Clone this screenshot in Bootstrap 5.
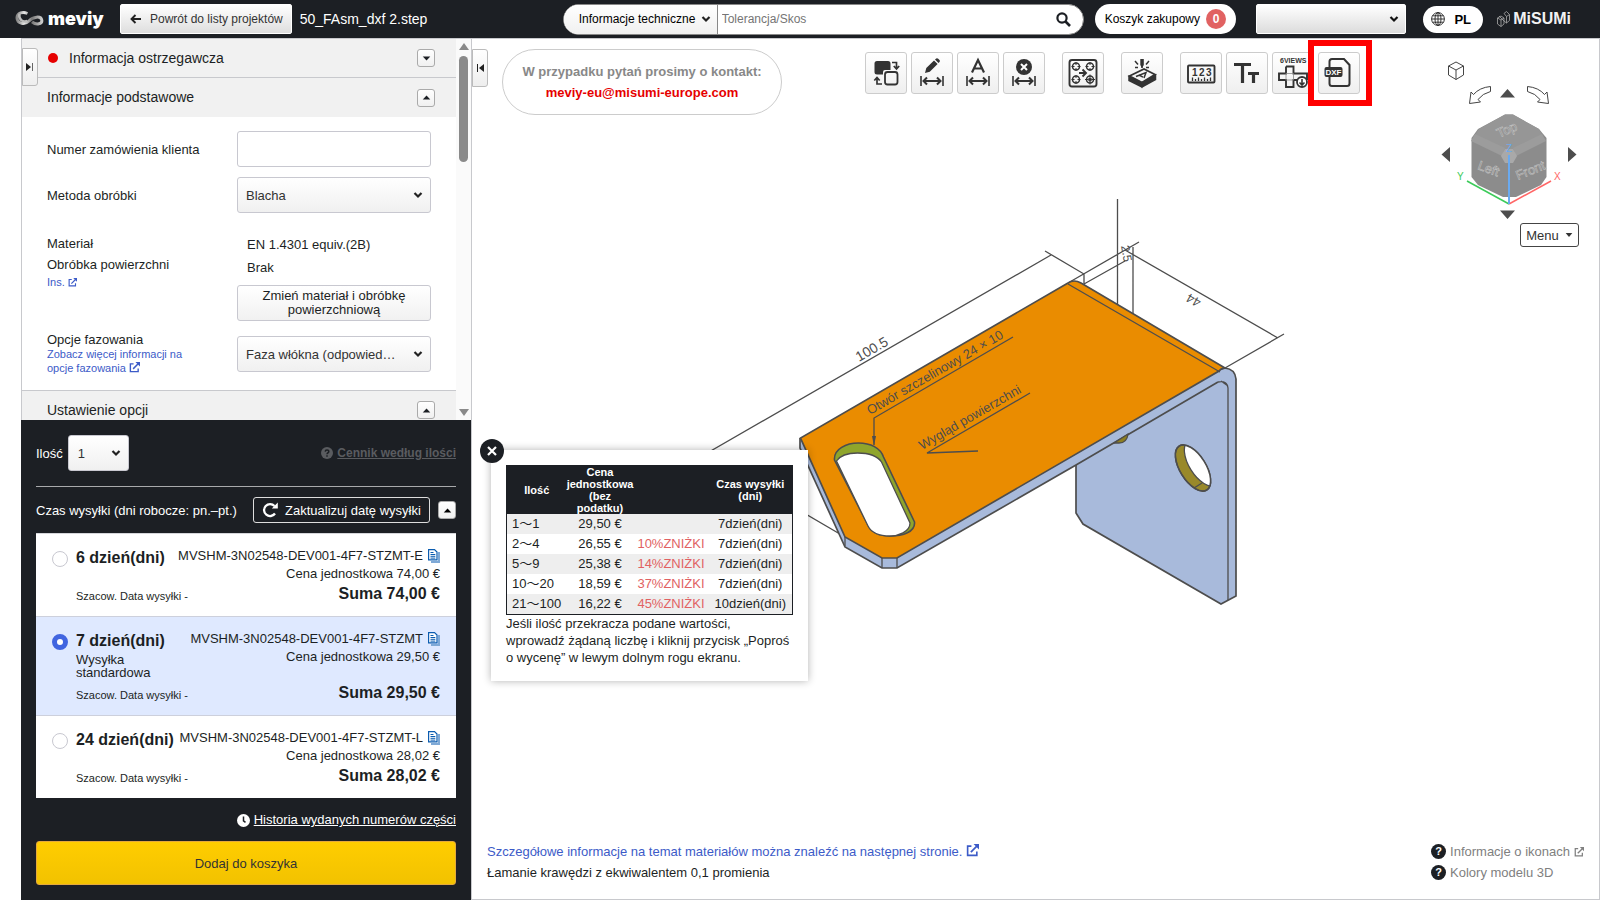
<!DOCTYPE html>
<html lang="pl">
<head>
<meta charset="utf-8">
<meta name="viewport" content="width=device-width, initial-scale=1">
<title>meviy – 50_FAsm_dxf 2.step</title>
<link href="https://cdn.jsdelivr.net/npm/bootstrap@5.3.0/dist/css/bootstrap.min.css" rel="stylesheet">
<style>
:root{--ink:#1c1f24;--line:#c8c9cd;--blue:#3c5bc8}
body{font-family:"Liberation Sans",Arial,sans-serif;font-size:13px;line-height:17px;color:var(--ink);background:#fff}
svg{display:block;flex:none}
button{color:inherit}
.min-h-0{min-height:0}
.fs-11{font-size:11px}.fs-12{font-size:12px}.fs-14{font-size:14px}.fs-16{font-size:16px;line-height:20px}
.mt-a{margin-top:10px}.mt-b{margin-top:20px}
.topbar{background:var(--ink);height:38px;padding:0 29px 0 15px}
.brand{width:90px;margin-right:15px;color:#fff;text-decoration:none;font:900 18px/24px Inter,sans-serif}
.btn-top{height:30px;border:1px solid #fff;border-radius:2px;background:linear-gradient(#fff,#dedede);color:#333;font-size:12px;padding:0 8px 0 9px;gap:8px}
.search{width:521px;height:31px;border:1px solid #888;border-radius:16px;background:#fff;overflow:hidden}
.search select{width:154px;height:29px;border:0;border-right:1px solid #888;border-radius:0;background-color:#fff;padding:0 20px 0 15px;background-position:right 6px center}
.search input{border:0;outline:0;font-size:12px;padding:0 4px;min-width:0}
.search input::placeholder{color:#757575;opacity:1}
.sel{appearance:none;border:1px solid #c8c8d0;border-radius:3px;height:36px;padding:0 24px 0 8px;color:#333;background:url("data:image/svg+xml,%3Csvg xmlns='http://www.w3.org/2000/svg' width='10' height='8' viewBox='0 0 10 8'%3E%3Cpath d='M1.5 2l3.500 3.500L8.500 2' fill='none' stroke='%23222' stroke-width='2.200'/%3E%3C/svg%3E") no-repeat right 7px center,linear-gradient(#fff,#f0f0f0)}
.sel-user{width:150px;height:30px;margin-left:20px;border-color:#fff;border-radius:2px;background-image:url("data:image/svg+xml,%3Csvg xmlns='http://www.w3.org/2000/svg' width='10' height='8' viewBox='0 0 10 8'%3E%3Cpath d='M1.500 2l3.500 3.500L8.500 2' fill='none' stroke='%23111' stroke-width='2.200'/%3E%3C/svg%3E"),linear-gradient(#fff,#dcdcdc);background-position:right 6px center,0 0}
.pill{background:#fff;border:0;border-radius:16px;height:30px;padding:0 10px;margin-left:11px;gap:6px}
.pill-lang{height:27px;width:60px;padding:0 12px 0 8px;margin-left:17px}
.count{width:20px;height:20px;border-radius:50%;background:#e16262;color:#fff;font-weight:700;font-size:12px;line-height:20px}
.misumi{margin-left:14px;width:74px;color:#f2f2f2;text-decoration:none;font-size:16px;line-height:20px;font-weight:900}
.rail{width:21px}
.side{width:451px;border-left:1px solid var(--line);border-right:1px solid var(--line)}
.side-top{border-top:1px solid var(--line)}
.acc{height:39px;background:#f1f1f1;padding:0 21px 0 25px;font-size:14px;flex:none}
.acc-line{border-bottom:1px solid var(--line)}
.acc-top{border-top:1px solid var(--line)}
.tog{width:18px;height:18px;padding:0;border:1px solid #aaa;border-radius:3px;background:linear-gradient(#fff,#f0f0f0)}
.dot{width:10px;height:10px;border-radius:50%;background:#e60000;margin:0 11px 0 1px}
.tab{width:16px;height:38px;padding:0;border:1px solid #bbb;border-radius:0 3px 3px 0;background:linear-gradient(#fff,#eee)}
.tab-left{left:0;top:9px}
.form-part{padding:14px 25px 15px 25px}
.lab{width:190px;flex:none}
.lab-s{line-height:15px}
.ctl{width:194px;flex:none}
.ctl-input{height:36px;border:1px solid #c8c8d0;border-radius:3px}
.lh-m{line-height:23px;padding-left:10px}.lh-l{line-height:21px}
.row-faz{margin-top:11px}
.lnk{color:var(--blue);font-size:11px;line-height:14px;text-decoration:none}
.lnk svg,.ext{display:inline-block;vertical-align:-1px}
.btn-mat{height:36px;margin-top:6px;border:1px solid #c8c8d0;border-radius:3px;background:linear-gradient(#fff,#f1f1f1);font-size:13px;line-height:14px;padding:0 20px}
.track{width:15px;background:#fafafa;padding:4px 0;flex:none;color:#8a8a8a}
.thumb{width:9px;height:106px;border-radius:5px;background:#8a8a8a;margin-top:6px}
.order{background:var(--ink);color:#fff;padding:15px 14px;margin-left:-1px}
.order-in{width:420px;margin-left:1px}
.qty-lab{margin-right:5px}
.sel-qty{width:61px;padding-left:9px}
.rule{border-top:1px solid #a8a9ab;margin-top:15px;padding-top:10px}
.dim{color:#5a5c60}
.btn-date{height:26px;width:177px;border:1px solid #ddd;border-radius:3px;background:none;color:#fff;padding:0 8px;gap:6px}
.plans{margin-top:10px;border-top:1px solid #d5d6da}
.plan{background:#fff;color:var(--ink);padding:13px 16px 12px;gap:8px;border-bottom:1px solid #cdd0dc}
.plan:last-child{border-bottom:0}
.plan.on{background:#dfe9ff}
.plan input{appearance:none;width:16px;height:16px;border:1px solid #c8c8d0;border-radius:50%;background:#fff;margin:4px 0 0}
.plan input:checked{border:5px solid #4165e0}
.ttl{font-size:16px;font-weight:700;line-height:20px;margin-top:1px}
.sub{line-height:13px;margin-top:2px;margin-bottom:4px}
.code{line-height:18px;gap:5px}
.sum-row{margin-top:2px}
.sz{font-size:11px;line-height:14px;padding-bottom:1px}
.hist{margin-top:12px;line-height:20px}
.btn-cart{height:44px;border:1px solid #e5a93c;border-radius:3px;background:linear-gradient(#ffcd00,#f2c200);color:#333;margin-top:11px}
.stage{border:1px solid var(--line);border-left:0;min-width:0}
.model{inset:0}
.over{z-index:2}
.contact{width:280px;height:66px;border:1px solid #ccc;border-radius:33px;line-height:21px;color:#888;font-weight:700;margin:10px 0 0 14px}
.contact a{color:#e60000;text-decoration:none}
.tools{margin:13px 80px 0 0;gap:17px}
.tool{width:42px;height:42px;padding:0;border:1px solid #ccc;border-radius:3px;background:linear-gradient(#fff,#efefef);position:relative}
.tool text{font-family:"Liberation Sans",sans-serif;font-weight:700}
.frame{inset:-13px -13px -13px -11px;border:6px solid #f00;pointer-events:none}
.views{width:140px;margin:20px 19px 0 0}
.btn-menu{width:59px;height:24px;border:1px solid #444;border-radius:3px;background:#fff;color:#333;gap:6px;margin-right:1px}
.pop{left:19px;top:411px;width:317px;background:#fff;padding:15px;box-shadow:0 0 8px rgba(0,0,0,.3)}
.pop p{padding-right:3px}
.pop-x{left:-11px;top:-11px;width:24px;height:24px;border:0;border-radius:50%;background:var(--ink);padding:6px}
.prices{width:287px;table-layout:fixed;border-collapse:collapse;border:1px solid var(--ink);text-align:center}
.prices th{background:var(--ink);color:#fff;font-size:11px;line-height:12px;padding:0}
.prices td{height:20px;line-height:20px;padding:0}
.prices tbody tr:nth-child(odd){background:#eee}
.prices td:first-child{text-align:left;padding-left:5px;font-family:"Liberation Sans","Noto Sans CJK JP",sans-serif}
.prices td:nth-child(3){color:#e16262}
.c-qty{width:60px}.c-price{width:67px}.c-off{width:75px}
.foot{padding:0 15px 16px 15px;line-height:21px}
.foot a{text-decoration:none;color:var(--blue)}
.foot .hint{color:#808080}
.q{width:15px;height:15px;border-radius:50%;background:var(--ink);color:#fff;font-weight:700;font-size:11px;line-height:15px;text-align:center}
</style>
</head>
<body class="vh-100 d-flex flex-column overflow-hidden">
<svg width="0" height="0" class="position-absolute" aria-hidden="true">
<symbol id="ext" viewBox="0 0 12 12"><path d="M5 2H1.500v8.500H10V7" fill="none" stroke="currentColor" stroke-width="1.500"/><path d="M4.500 7.500L10 2" stroke="currentColor" stroke-width="1.600"/><path d="M7 0h5v5z" fill="currentColor"/></symbol>
<symbol id="up" viewBox="0 0 10 6"><path d="M5 .5L9.500 5.500h-9z" fill="currentColor"/></symbol>
<symbol id="down" viewBox="0 0 10 6"><path d="M5 5.500L.5.500h9z" fill="currentColor"/></symbol>
<symbol id="copy" viewBox="0 0 12 14"><path d="M3 13h8V3" fill="none" stroke="#7fa9d6" stroke-width="2"/><path d="M.6.600h5.900L9 3v7.900H.6z" fill="#fff" stroke="#0b5cb0" stroke-width="1.200"/><path d="M2.500 3.500h3M2.500 5.500h4.800M2.500 7.300h4.800M2.500 9.100h4.800" stroke="#0b5cb0"/></symbol>
<symbol id="dimline" viewBox="0 0 24 10"><path d="M1 0v10M23 0v10" stroke="#333" stroke-width="1.600"/><path d="M3 5h18M7 1.500L3.500 5 7 8.500M17 1.500L20.500 5 17 8.500" fill="none" stroke="#333" stroke-width="2"/></symbol>
</svg>

<header class="topbar d-flex align-items-center flex-shrink-0">
  <a class="brand d-flex align-items-center gap-1" href="#">
    <svg width="29" height="16" viewBox="0 0 29 16"><defs><linearGradient id="lg" x1="0" x2="1"><stop offset="0" stop-color="#888"/><stop offset=".3" stop-color="#e6e6e6"/><stop offset=".6" stop-color="#777"/><stop offset="1" stop-color="#ccc"/></linearGradient></defs><path d="M12.500 2.500C8 .5 2 1.500 2 7c.2 6 8 7 12 3 4-4.500 12-5.500 12.800-.8.600 3.800-5.500 5.300-9.800 1.600" fill="none" stroke="url(#lg)" stroke-width="3"/><path d="M4.500 3c-1 5 3 9 8 7" fill="none" stroke="#bbb" stroke-width="2.500"/></svg>
    <span>meviy</span></a>
  <button class="btn-top d-flex align-items-center" type="button"><svg width="12" height="10" viewBox="0 0 12 10"><path d="M5.500 1L1.500 5l4 4M1.500 5H11" fill="none" stroke="#222" stroke-width="1.900"/></svg>Powrót do listy projektów</button>
  <span class="text-white fs-14 ms-2">50_FAsm_dxf 2.step</span>
  <form class="search d-flex align-items-center ms-auto">
    <select class="sel fs-12 text-black" aria-label="Zakres"><option>Informacje techniczne</option></select>
    <input class="flex-grow-1" type="text" placeholder="Tolerancja/Skos" aria-label="Tolerancja/Skos">
    <button type="button" class="border-0 bg-transparent p-0 me-2" aria-label="Szukaj"><svg class="me-1" width="15" height="15" viewBox="0 0 15 15"><circle cx="6" cy="6" r="4.600" fill="none" stroke="#1c1f24" stroke-width="2.200"/><path d="M9.500 9.500L14 14" stroke="#1c1f24" stroke-width="2.600"/></svg></button>
  </form>
  <button type="button" class="pill d-flex align-items-center fs-12 text-black">Koszyk zakupowy<span class="count">0</span></button>
  <select class="sel sel-user" aria-label="Użytkownik"><option></option></select>
  <button type="button" class="pill pill-lang d-flex align-items-center justify-content-between fw-bold text-black"><svg width="14" height="14" viewBox="0 0 14 14" fill="none" stroke="#222" stroke-width=".9"><circle cx="7" cy="7" r="6.400"/><ellipse cx="7" cy="7" rx="3" ry="6.400"/><path d="M7 .6v12.800M.6 7h12.800M1.500 3.800h11M1.500 10.200h11"/></svg>PL</button>
  <a class="misumi d-flex align-items-center justify-content-between" href="#"><svg width="13" height="16" viewBox="0 0 13 16" fill="none" stroke="#aaa" stroke-width=".8"><path d="M.5 7l3.500-2 3 2v6l-3 2.500L.500 13zM.5 7L4 9l3-2M4 9v6.500M7 2.500L9.500.500l3 3v6L9.500 12 7 10M7 2.500l2.500 3 3-2M9.500 5.500V12M2 5l5 5"/></svg>MiSUMi</a>
</header>

<main class="d-flex flex-grow-1 min-h-0">
  <div class="rail flex-shrink-0"></div>
  <aside class="side d-flex flex-column flex-shrink-0">
    <div class="side-top position-relative d-flex flex-grow-1 overflow-hidden min-h-0">
      <button class="tab tab-left position-absolute d-flex align-items-center justify-content-center" type="button" aria-label="Zwiń"><svg width="8" height="8" viewBox="0 0 8 8"><path d="M0 0l5 4-5 4z" fill="#222"/><path d="M6.500 0v8" stroke="#666"/></svg></button>
      <div class="flex-grow-1 overflow-hidden">
        <div class="acc acc-line d-flex align-items-center"><span class="dot"></span><span class="me-auto">Informacja ostrzegawcza</span><button class="tog d-flex align-items-center justify-content-center" type="button" aria-label="Rozwiń"><svg width="9" height="5"><use href="#down"/></svg></button></div>
        <div class="acc d-flex align-items-center"><span class="me-auto">Informacje podstawowe</span><button class="tog d-flex align-items-center justify-content-center" type="button" aria-label="Zwiń"><svg width="9" height="5"><use href="#up"/></svg></button></div>
        <div class="form-part">
          <div class="d-flex align-items-center"><label class="lab" for="po">Numer zamówienia klienta</label><input id="po" class="ctl ctl-input" type="text"></div>
          <div class="d-flex align-items-center mt-a"><label class="lab" for="met">Metoda obróbki</label><select id="met" class="ctl sel"><option>Blacha</option></select></div>
          <div class="d-flex mt-b">
            <div class="lab"><div class="lh-l">Materiał</div><div class="lh-l">Obróbka powierzchni</div><a class="lnk d-block" href="#">Ins. <svg width="9" height="9"><use href="#ext"/></svg></a></div>
            <div class="ctl"><div class="lh-m">EN 1.4301 equiv.(2B)</div><div class="lh-m">Brak</div><button type="button" class="btn-mat w-100">Zmień materiał i obróbkę powierzchniową</button></div>
          </div>
          <div class="row-faz d-flex align-items-start">
            <div class="lab"><label class="lab-s d-block" for="faz">Opcje fazowania</label><a class="lnk d-block" href="#">Zobacz więcej informacji na<br>opcje fazowania <svg width="11" height="11"><use href="#ext"/></svg></a></div>
            <select id="faz" class="ctl sel mt-1"><option>Faza włókna (odpowied…</option></select>
          </div>
        </div>
        <div class="acc acc-top d-flex align-items-center"><span class="me-auto">Ustawienie opcji</span><button class="tog d-flex align-items-center justify-content-center" type="button" aria-label="Zwiń"><svg width="9" height="5"><use href="#up"/></svg></button></div>
      </div>
      <div class="track d-flex flex-column align-items-center" aria-hidden="true"><svg width="10" height="7" viewBox="0 0 10 7"><path d="M5 0l5 7H0z" fill="currentColor"/></svg><div class="thumb"></div><svg class="mt-auto" width="10" height="7" viewBox="0 0 10 7"><path d="M5 7L0 0h10z" fill="currentColor"/></svg></div>
    </div>
    <section class="order flex-shrink-0"><div class="order-in">
      <div class="d-flex align-items-center"><label for="qty" class="qty-lab">Ilość</label><select id="qty" class="sel sel-qty"><option>1</option></select>
        <span class="ms-auto d-flex align-items-center gap-1 dim"><svg width="12" height="12" viewBox="0 0 12 12"><circle cx="6" cy="6" r="6" fill="currentColor"/><path d="M4.200 4.600c.1-2.300 3.700-2.100 3.600 0C7.700 6 6 5.800 6 7.300M6 8.200v1.500" fill="none" stroke="#1c1f24" stroke-width="1.500"/></svg><a href="#" class="dim fw-bold fs-12">Cennik według ilości</a></span></div>
      <div class="rule d-flex align-items-center"><span>Czas wysyłki (dni robocze: pn.–pt.)</span><button type="button" class="btn-date d-flex align-items-center ms-auto"><svg width="17" height="16" viewBox="0 0 17 16"><path d="M13 11.500A6 6 0 1 1 12.500 4" fill="none" stroke="#fff" stroke-width="2.300"/><path d="M15.800.500v6h-6z" fill="#fff"/></svg>Zaktualizuj datę wysyłki</button><button class="tog d-flex align-items-center justify-content-center ms-2 text-black" type="button" aria-label="Zwiń"><svg width="9" height="5"><use href="#up"/></svg></button></div>
      <div class="plans">
        <div class="plan d-flex"><input type="radio" name="plan" id="p6">
          <div class="flex-grow-1">
            <div class="d-flex justify-content-between"><label class="ttl" for="p6">6 dzień(dni)</label><div class="text-end"><div class="code d-flex align-items-center">MVSHM-3N02548-DEV001-4F7-STZMT-E<svg width="12" height="14"><use href="#copy"/></svg></div><div>Cena jednostkowa 74,00 €</div></div></div>
            <div class="sum-row d-flex justify-content-between align-items-end"><span class="sz">Szacow. Data wysyłki -</span><b class="fs-16">Suma 74,00 €</b></div>
          </div></div>
        <div class="plan on d-flex"><input type="radio" name="plan" id="p7" checked>
          <div class="flex-grow-1">
            <div class="d-flex justify-content-between"><div><label class="ttl d-block" for="p7">7 dzień(dni)</label><div class="sub">Wysyłka<br>standardowa</div></div><div class="text-end"><div class="code d-flex align-items-center">MVSHM-3N02548-DEV001-4F7-STZMT<svg width="12" height="14"><use href="#copy"/></svg></div><div>Cena jednostkowa 29,50 €</div></div></div>
            <div class="d-flex justify-content-between align-items-end"><span class="sz">Szacow. Data wysyłki -</span><b class="fs-16">Suma 29,50 €</b></div>
          </div></div>
        <div class="plan d-flex"><input type="radio" name="plan" id="p24">
          <div class="flex-grow-1">
            <div class="d-flex justify-content-between"><label class="ttl" for="p24">24 dzień(dni)</label><div class="text-end"><div class="code d-flex align-items-center">MVSHM-3N02548-DEV001-4F7-STZMT-L<svg width="12" height="14"><use href="#copy"/></svg></div><div>Cena jednostkowa 28,02 €</div></div></div>
            <div class="sum-row d-flex justify-content-between align-items-end"><span class="sz">Szacow. Data wysyłki -</span><b class="fs-16">Suma 28,02 €</b></div>
          </div></div>
      </div>
      <div class="hist d-flex align-items-center justify-content-end gap-1"><svg width="13" height="13" viewBox="0 0 13 13"><circle cx="6.500" cy="6.500" r="6.500" fill="#fff"/><path d="M6.500 2.500v4.300l2 1.500" fill="none" stroke="#1c1f24" stroke-width="1.500"/></svg><a class="text-white" href="#">Historia wydanych numerów części</a></div>
      <button type="button" class="btn-cart w-100">Dodaj do koszyka</button>
    </div></section>
  </aside>

  <section class="stage position-relative flex-grow-1 d-flex flex-column">
    <svg class="model position-absolute w-100 h-100" viewBox="472 39 1127 860" fill="none" stroke="#4d4d4d" stroke-width="1.300" font-family="Liberation Sans, sans-serif">
      <defs><clipPath id="hole"><ellipse cx="1193" cy="468" rx="13" ry="26" transform="rotate(-32 1193 468)"/></clipPath></defs>
      <path d="M650 486L1051 255M1045 251l39 23v12M1068 283l71-41M1084 284l41-23M1117.500 199v106M1133 247v67M1125 250l153 88M1284 334l-59 34M780 499l65 38"/>
      <g stroke-width="1.700">
        <path fill="#a8badb" d="M1076 464v49l7 11 138 80 15-8V379q-1-10-11-11l-30 10z"/>
        <path fill="#a8badb" stroke="none" d="M800 438v10l45 99 37 21h15l179-103 142-83 3-11z"/>
        <path d="M800 438v10l45 99 37 21h15l179-103 142-83"/>
        <path fill="#ea8c00" stroke="none" d="M800.500 438L1068 283q6-4 13 0l144 85q-4 0-6 3L897 558h-15l-37-21z"/>
        <path d="M1225 368q-4 0-6 3L897 558h-15l-37-21-44.500-99L1068 283q6-4 13 0l144 85"/>
      </g>
      <path d="M1068 284l152 88M845 537v9M882 558v10M897 558v10M1228 600V388q-1-8-10-6M1221 381l7 5"/>
      <path fill="#8c7e20" d="M1114 443l14-9q-1 9-9 9z"/>
      <path fill="#8fa52c" stroke-width="1.600" d="M834.500 460c-1-11 12-17 24-17 12 0 22 5 25 14l31 65c1 10-12 14-24 14-10 0-18-2-22-10z"/>
      <path fill="#fff" d="M836.500 461c4-6 12-8 21-8 11 0 20 3 24 9l28.500 61c0 9-12 13-20 13-10 0-18-2-22-10z"/>
      <ellipse cx="1193" cy="468" rx="13" ry="26" transform="rotate(-32 1193 468)" fill="#99892a"/>
      <g clip-path="url(#hole)"><ellipse cx="1202" cy="463" rx="13" ry="26" transform="rotate(-32 1202 463)" fill="#fff"/><path d="M1194 488l8-5"/></g>
      <ellipse cx="1193" cy="468" rx="13" ry="26" transform="rotate(-32 1193 468)" stroke-width="1.600"/>
      <path d="M874 445v-27l139-81M978 451l-51 2 103-60"/><path d="M874 446l-2-10h4z" fill="#4d4d4d" stroke="none"/>
      <g fill="#4d4d4d" stroke="none" font-size="13">
        <text transform="translate(870 415) rotate(-30)">Otwór szczelinowy 24 × 10</text>
        <text transform="translate(922 450) rotate(-30)">Wygląd powierzchni</text>
        <text transform="translate(859 362) rotate(-30)" font-size="14">100.5</text>
        <text transform="translate(1202 300) rotate(210)">44</text>
        <text transform="translate(1121 246) rotate(80)" font-size="12">2.5</text>
      </g>
    </svg>
    <div class="over position-relative d-flex align-items-start">
      <button class="tab d-flex align-items-center justify-content-center mt-a" type="button" aria-label="Rozwiń"><svg width="8" height="8" viewBox="0 0 8 8"><path d="M8 0L3 4l5 4z" fill="#222"/><path d="M1.500 0v8" stroke="#222"/></svg></button>
      <div class="contact d-flex flex-column justify-content-center text-center"><span>W przypadku pytań prosimy o kontakt:</span><a href="#">meviy-eu@misumi-europe.com</a></div>
      <div class="tools d-flex ms-auto">
        <div class="d-flex gap-1">
          <button class="tool" type="button" aria-label="Zamień"><svg width="40" height="40" viewBox="1 1 40 40"><path d="M12 9h11q2.500 0 2.500 2.500V18H20q-2 0-2 2v2.500h-6q-2.500 0-2.500-2.500v-8.500Q9.500 9 12 9z" fill="#333"/><rect x="20" y="20" width="12.500" height="12.500" rx="2.500" fill="none" stroke="#333" stroke-width="1.800"/><path d="M27 10.500h4.500v6M28.800 14l2.700 3 2.700-3M17 32h-5v-6M9.300 28.500L12 25.500l2.700 3" fill="none" stroke="#333" stroke-width="1.700"/></svg></button>
          <button class="tool" type="button" aria-label="Edytuj wymiar"><svg width="40" height="40" viewBox="1 1 40 40"><path d="M14 21l1.300-5L23 8.500l3.600 3.500-7.800 7.800zM24 7.500l1.200-1q1-.8 2 .2l1.300 1.400q.9 1 0 1.900l-1 1z" fill="#333"/><use href="#dimline" x="9" y="24" width="24" height="10"/></svg></button>
          <button class="tool" type="button" aria-label="Wymiar tekstowy"><svg width="40" height="40" viewBox="1 1 40 40"><path d="M15 20.500L21 8l6 12.500M17 16.500h8" fill="none" stroke="#333" stroke-width="2.200"/><use href="#dimline" x="9" y="24" width="24" height="10"/></svg></button>
          <button class="tool" type="button" aria-label="Usuń wymiar"><svg width="40" height="40" viewBox="1 1 40 40"><circle cx="21" cy="15" r="8" fill="#333"/><path d="M18 12l6 6M24 12l-6 6" stroke="#fff" stroke-width="2"/><use href="#dimline" x="9" y="24" width="24" height="10"/></svg></button>
        </div>
        <button class="tool" type="button" aria-label="Otwory"><svg width="40" height="40" viewBox="1 1 40 40" fill="none" stroke="#333"><rect x="7.500" y="8" width="27" height="26.500" rx="2.500" stroke-width="1.900"/><g stroke-width="1.500"><circle cx="14" cy="14.500" r="3.500"/><circle cx="28" cy="14.500" r="3.500"/><circle cx="14" cy="27.500" r="3.500"/><circle cx="28" cy="27.500" r="3.500"/></g><circle cx="28" cy="27.500" r="1.500" fill="#333"/><path d="M14 10v3M14 16v3M9.500 14.500h3M15.500 14.500h3M28 10v3M28 16v3M23.500 14.500h3M29.500 14.500h3M14 23v3M14 29v3M9.500 27.500h3M15.500 27.500h3M28 22.500v3M28 29v3.500M23 27.500h3M30 27.500h3" stroke-width="1"/><path d="M17 21h6M20.500 17.500L24 21l-3.500 3.500" stroke-width="1.900"/></svg></button>
        <button class="tool" type="button" aria-label="Grawerowanie"><svg width="40" height="40" viewBox="1 1 40 40" fill="none" stroke="#333"><path d="M8.500 24L23 17l11 5.500-13 8z" stroke-width="1.800"/><path d="M8 24.500l13 6.500v4L8 28.500zM21 31l13.500-8v4.500L21 35z" fill="#333" stroke-width="1.500"/><path d="M15 24.500l10-4-2 5.500M18 23l4 2.200" stroke-width="1.500"/><path d="M21 7v9M14 9l3 3.500M28 9l-3 3.500M14 15.500h3M25 15.500h3" stroke-width="1.500"/><path d="M19.300 7h3.500v6L21 16l-1.700-3z" fill="#333" stroke="none"/></svg></button>
        <div class="d-flex gap-1">
          <button class="tool" type="button" aria-label="Pomiar"><svg width="40" height="40" viewBox="1 1 40 40"><rect x="8" y="13.500" width="26.500" height="17" rx="1" fill="none" stroke="#333" stroke-width="1.900"/><path d="M12.500 29v-3.500M15.500 29v-2M18.500 29v-3.500M21.500 29v-2M24.500 29v-3.500M27.500 29v-2M30.500 29v-3.500" stroke="#333" stroke-width="1.300"/><text x="12" y="24" font-size="10" fill="#333">1</text><text x="19" y="24" font-size="10" fill="#333">2</text><text x="26" y="24" font-size="10" fill="#333">3</text></svg></button>
          <button class="tool" type="button" aria-label="Tekst"><svg width="40" height="40" viewBox="1 1 40 40"><path d="M8 12.500h17M16.500 12.500V31M22 21.500h11M27.500 21.500V31" stroke="#333" stroke-width="3.200"/></svg></button>
          <button class="tool" type="button" aria-label="6 widoków"><svg width="40" height="40" viewBox="1 1 40 40" fill="none" stroke="#333"><text x="8" y="11" font-size="7" fill="#333" stroke="none">6VIEWS</text><path d="M14 14.500h7.500v7H35V28M14 14.500v7H7v6.500h7V35h7.500v-7H26" stroke-width="1.900"/><path d="M14 21.500h7.500M14 28h7.500M14 21.500V28M21.500 21.500V28" stroke-width=".8" stroke="#888"/><circle cx="30" cy="30" r="5" fill="#fff" stroke-width="1.800"/><path d="M30 27v5.500M27.500 30.500l2.500 2.500 2.500-2.500" stroke-width="1.600"/></svg></button>
          <button class="tool" type="button" aria-label="Pobierz DXF"><svg width="40" height="40" viewBox="1 1 40 40"><path d="M11.500 15V9.500q0-2.500 2.500-2.500h12l5.500 6v18.500q0 2.500-2.500 2.500H14q-2.500 0-2.500-2.500V25" fill="none" stroke="#333" stroke-width="2"/><rect x="6.500" y="15" width="18" height="10" rx="2" fill="#333"/><text x="7.500" y="23" font-size="8" fill="#fff">DXF</text></svg><span class="frame position-absolute"></span></button>
        </div>
      </div>
      <div class="views d-flex flex-column align-items-end">
        <svg width="140" height="164" viewBox="1440 59 140 164" fill="none" stroke="#444">
          <path d="M1448.500 66l7.500-4 7.500 4v9l-7.500 4.500-7.500-4.500zM1448.500 66l7.500 4 7.500-4M1456 70v9.500"/>
          <path d="M1490.500 86.500v5q-8 2-12.500 8l2.500 2.500-11 1.500 1.500-11.500 2.500 2.500q6-7 17-8zM1527.500 86.500v5q8 2 12.500 8l-2.500 2.500 11 1.500-1.500-11.500-2.500 2.500q-6-7-17-8z"/>
          <g fill="#4d4d4d" stroke="none"><path d="M1507.500 89l7.500 8.500h-15zM1507.500 219l7.500-8.500h-15zM1441.500 154.500l8.500-7.500v15zM1576.500 154.500l-8.500-7.500v15z"/>
          <path fill="#8c8c8c" d="M1505 114.500h8l26 14.500 7.500 9v39l-5.500 8-25 12h-13l-25-12-6.500-8v-39l6.500-9z"/><path fill="#969696" d="M1505 114.500h8l26 14.500 3 6-29 15h-8l-30-15 4-6z"/><path fill="#9c9c9c" d="M1475 134l30 14-3 8-31-15zM1542 134l-29 14 3 8 30-15z"/><path fill="#a9a9a9" d="M1505 149h8l4 7-4 7h-8l-4-7z"/></g>
          <path d="M1467 181l42 23" stroke="#3ccb5a" stroke-width="1.500"/><path d="M1551 181l-42 23" stroke="#f66" stroke-width="1.500"/><path d="M1509 155v49" stroke="#6aaaf0" stroke-width="2"/>
          <g font-family="Liberation Sans, sans-serif" stroke="#c0c0c0" stroke-width=".6" font-size="13" fill="#7c7c7c"><text transform="translate(1499 138) rotate(-24)">Top</text><text transform="translate(1477 169) rotate(20)">Left</text><text transform="translate(1518 180) rotate(-22)">Front</text></g>
          <g font-family="Liberation Sans, sans-serif" font-size="10" stroke="none"><text x="1457" y="180" fill="#3ccb5a">Y</text><text x="1554" y="180" fill="#f66">X</text><text x="1506" y="152" fill="#6aaaf0">Z</text></g>
        </svg>
        <button type="button" class="btn-menu d-flex align-items-center justify-content-center p-0">Menu<svg width="8" height="4" viewBox="0 0 10 6"><path d="M0 0h10L5 6z" fill="#333"/></svg></button>
      </div>
    </div>
    <div class="pop position-absolute over">
      <button class="pop-x position-absolute" type="button" aria-label="Zamknij"><svg width="12" height="12" viewBox="0 0 12 12"><path d="M2 2l8 8M10 2l-8 8" stroke="#fff" stroke-width="2.200"/></svg></button>
      <table class="prices"><colgroup><col class="c-qty"><col class="c-price"><col class="c-off"><col></colgroup>
        <thead><tr><th>Ilość</th><th>Cena jednostkowa (bez podatku)</th><th></th><th>Czas wysyłki (dni)</th></tr></thead>
        <tbody>
          <tr><td>1～1</td><td>29,50 €</td><td></td><td>7dzień(dni)</td></tr>
          <tr><td>2～4</td><td>26,55 €</td><td>10%ZNIŻKI</td><td>7dzień(dni)</td></tr>
          <tr><td>5～9</td><td>25,38 €</td><td>14%ZNIŻKI</td><td>7dzień(dni)</td></tr>
          <tr><td>10～20</td><td>18,59 €</td><td>37%ZNIŻKI</td><td>7dzień(dni)</td></tr>
          <tr><td>21～100</td><td>16,22 €</td><td>45%ZNIŻKI</td><td>10dzień(dni)</td></tr>
        </tbody></table>
      <p class="mb-0">Jeśli ilość przekracza podane wartości, wprowadź żądaną liczbę i kliknij przycisk „Poproś o&nbsp;wycenę” w lewym dolnym rogu ekranu.</p>
    </div>
    <div class="foot over position-relative d-flex justify-content-between mt-auto">
      <div><a href="#">Szczegółowe informacje na temat materiałów można znaleźć na następnej stronie. <svg class="ext" width="13" height="13"><use href="#ext"/></svg></a><div>Łamanie krawędzi z ekwiwalentem 0,1 promienia</div></div>
      <div><a href="#" class="hint d-flex align-items-center"><span class="q me-1">?</span>Informacje o ikonach<svg class="ms-1" width="10" height="10"><use href="#ext"/></svg></a><a href="#" class="hint d-flex align-items-center"><span class="q me-1">?</span>Kolory modelu 3D</a></div>
    </div>
  </section>
</main>
<script src="https://cdn.jsdelivr.net/npm/bootstrap@5.3.0/dist/js/bootstrap.bundle.min.js"></script>
</body>
</html>
